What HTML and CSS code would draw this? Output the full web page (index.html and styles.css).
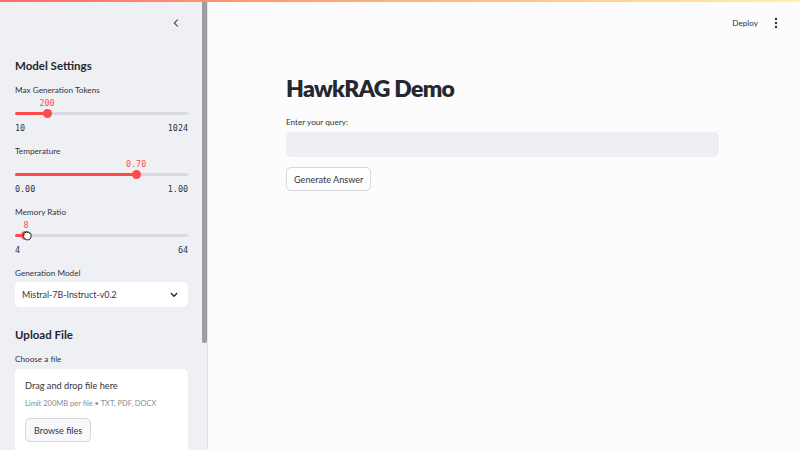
FILE: index.html
```html
<!DOCTYPE html>
<html>
<head>
<meta charset="utf-8">
<link rel="stylesheet" href="styles.css">
</head>
<body>
<div class="decoration"></div>
<div class="app">
  <aside class="sidebar">
    <div class="side-content">
      <div class="side-top">
        <svg class="collapse" width="10" height="10" viewBox="0 0 10 10"><path d="M6.5 1.8 L3.3 5 L6.5 8.2" fill="none" stroke="#555863" stroke-width="1.2" stroke-linecap="round" stroke-linejoin="round"/></svg>
      </div>
      <h3 class="side-h">Model Settings</h3>

      <div class="field">
        <div class="label">Max Generation Tokens</div>
        <div class="slider">
          <div class="val" style="left:18.5%">200</div>
          <div class="track"><div class="fill" style="width:18.5%"></div><div class="thumb" style="left:18.5%"></div></div>
          <div class="minmax"><span>10</span><span>1024</span></div>
        </div>
      </div>

      <div class="field">
        <div class="label">Temperature</div>
        <div class="slider">
          <div class="val" style="left:70%">0.70</div>
          <div class="track"><div class="fill" style="width:70%"></div><div class="thumb" style="left:70%"></div></div>
          <div class="minmax"><span>0.00</span><span>1.00</span></div>
        </div>
      </div>

      <div class="field">
        <div class="label">Memory Ratio</div>
        <div class="slider">
          <div class="val" style="left:6.35%">8</div>
          <div class="track"><div class="fill" style="width:6.35%"></div><div class="thumb" style="left:6.35%"></div>
            <svg class="cursor" style="left:6.35%" width="12" height="12" viewBox="0 0 12 12"><path d="M3 6.5 V4.2 a0.9 0.9 0 0 1 1.8 0 V3.6 a0.9 0.9 0 0 1 1.8 0 V3.9 a0.9 0.9 0 0 1 1.8 0 V4.5 a0.9 0.9 0 0 1 1.6 0.3 V7.5 c0 2 -1.3 3.4 -3.3 3.4 c-1.6 0 -2.5 -0.8 -3.2 -2 L1.9 7.3 a0.8 0.8 0 0 1 1.1 -0.8 Z" fill="#fff" stroke="#111" stroke-width="0.9" stroke-linejoin="round"/></svg>
          </div>
          <div class="minmax"><span>4</span><span>64</span></div>
        </div>
      </div>

      <div class="field">
        <div class="label">Generation Model</div>
        <div class="select">
          <span>Mistral-7B-Instruct-v0.2</span>
          <svg width="10" height="10" viewBox="0 0 10 10"><path d="M2.3 3.6 L5 6.3 L7.7 3.6" fill="none" stroke="#262730" stroke-width="1.4" stroke-linecap="round" stroke-linejoin="round"/></svg>
        </div>
      </div>

      <h3 class="side-h upload-h">Upload File</h3>
      <div class="field">
        <div class="label">Choose a file</div>
        <div class="dropzone">
          <div class="dz-title">Drag and drop file here</div>
          <div class="dz-sub">Limit 200MB per file • TXT, PDF, DOCX</div>
          <button class="btn small">Browse files</button>
        </div>
      </div>
    </div>
    <div class="scrollbar"><div class="scroll-thumb"></div></div>
  </aside>

  <main class="main">
    <header class="toolbar">
      <span class="deploy">Deploy</span>
      <svg class="kebab" width="6" height="12" viewBox="0 0 6 12"><circle cx="3" cy="2" r="1.2" fill="#31333f"/><circle cx="3" cy="6" r="1.2" fill="#31333f"/><circle cx="3" cy="10" r="1.2" fill="#31333f"/></svg>
    </header>
    <section class="block">
      <h1 class="title">HawkRAG Demo</h1>
      <div class="label">Enter your query:</div>
      <div class="input"></div>
      <button class="btn">Generate Answer</button>
    </section>
  </main>
</div>
</body>
</html>
```

FILE: styles.css
```css
* { box-sizing: border-box; }
html, body { margin: 0; padding: 0; }
body {
  width: 800px;
  height: 450px;
  overflow: hidden;
  font-family: Lato, "Noto Sans", sans-serif;
  color: #31333f;
  background: #fcfcfd;
}
.decoration {
  height: 2px;
  background: linear-gradient(90deg, #ff6b6b 0%, #ffb37a 50%, #fff2a0 100%);
}
.app {
  display: flex;
  height: 448px;
}
.sidebar {
  width: 208px;
  flex: none;
  display: flex;
  background: #eff0f4;
  border-right: 1px solid #e2e3e8;
}
.side-content {
  flex: 1;
  padding: 0 14px 0 15px;
}
.side-top {
  height: 42px;
  display: flex;
  justify-content: flex-end;
  align-items: center;
  padding-right: 7px;
}
.collapse { display: block; }
.side-h {
  margin: 14px 0 10px;
  font-size: 11.5px;
  font-weight: 700;
  color: #262730;
  line-height: 16px;
}
.field { margin-bottom: 11px; }
.label {
  font-size: 8.2px;
  line-height: 12px;
  color: #31333f;
  margin-bottom: 1px;
}
.slider { position: relative; padding-top: 12px; }
.val {
  position: absolute;
  top: 0;
  transform: translateX(-50%);
  font-family: "DejaVu Sans Mono", "Liberation Mono", monospace;
  font-size: 8.4px;
  line-height: 12px;
  color: #ff4b4b;
}
.track {
  position: relative;
  height: 3px;
  margin: 3px 0 7px;
  border-radius: 2px;
  background: #d8dae0;
}
.fill {
  height: 3px;
  border-radius: 2px;
  background: #ff4b4b;
}
.thumb {
  position: absolute;
  top: -3px;
  width: 9px;
  height: 9px;
  margin-left: -4.5px;
  border-radius: 50%;
  background: #ff4b4b;
}
.cursor {
  position: absolute;
  top: -5px;
  margin-left: -5px;
}
.minmax {
  display: flex;
  justify-content: space-between;
  font-family: "DejaVu Sans Mono", "Liberation Mono", monospace;
  font-size: 8.4px;
  line-height: 12px;
  color: #31333f;
}
.select {
  display: flex;
  align-items: center;
  justify-content: space-between;
  height: 25px;
  margin-top: 3px;
  padding: 0 9px 0 7px;
  background: #fff;
  border-radius: 5px;
  font-size: 8.9px;
  color: #31333f;
}
.select svg { display: block; }
.upload-h { margin-top: 20px; margin-bottom: 10px; }
.dropzone {
  margin-top: 4px;
  background: #fff;
  border-radius: 5px;
  padding: 10px 10px 10px;
  height: 90px;
}
.dz-title { font-size: 9.2px; line-height: 14px; color: #31333f; }
.dz-sub { font-size: 7.5px; line-height: 12px; color: #8a8c96; margin-top: 5px; }
.btn {
  display: block;
  font-family: Lato, "Noto Sans", sans-serif;
  font-size: 9.1px;
  color: #31333f;
  background: #fff;
  border: 1px solid #d6d7dc;
  border-radius: 5px;
  height: 24px;
  padding: 0 7px;
  cursor: pointer;
}
.btn.small { margin-top: 8px; background: #f8f8fa; padding: 0 8px; }
.scrollbar {
  width: 5px;
  flex: none;
}
.scroll-thumb {
  height: 341px;
  background: #9c9da3;
  border-radius: 0 0 2px 2px;
}
.main {
  flex: 1;
  background: #fcfcfd;
}
.toolbar {
  height: 42px;
  display: flex;
  justify-content: flex-end;
  align-items: center;
  gap: 15px;
  padding-right: 21px;
}
.deploy { font-size: 8.2px; color: #31333f; }
.kebab { display: block; }
.block {
  width: 433px;
  margin-left: 78px;
  padding-top: 27px;
}
.title {
  margin: 0 0 11px;
  font-size: 23px;
  letter-spacing: -0.7px;
  line-height: 34px;
  font-weight: 800;
  color: #262730;
}
.input {
  height: 25px;
  margin: 4px 0 10px;
  border-radius: 5px;
  background: #eeeff3;
}
```
